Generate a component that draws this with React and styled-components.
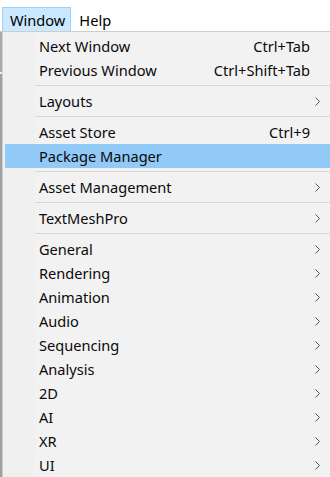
import React from 'react';
import styled, {createGlobalStyle} from 'styled-components';

const GlobalStyle = createGlobalStyle`
    html, body {
        margin: 0;
        background: #ffffff;
    }
    body {
        font-family: "Noto Sans", "Open Sans", sans-serif;
        color: #000;
    }
`;

const MENU = [
    {label: 'Next Window', shortcut: 'Ctrl+Tab'},
    {label: 'Previous Window', shortcut: 'Ctrl+Shift+Tab'},
    'sep',
    {label: 'Layouts', sub: true},
    'sep',
    {label: 'Asset Store', shortcut: 'Ctrl+9'},
    {label: 'Package Manager', active: true},
    'sep',
    {label: 'Asset Management', sub: true},
    'sep',
    {label: 'TextMeshPro', sub: true},
    'sep',
    {label: 'General', sub: true},
    {label: 'Rendering', sub: true},
    {label: 'Animation', sub: true},
    {label: 'Audio', sub: true},
    {label: 'Sequencing', sub: true},
    {label: 'Analysis', sub: true},
    {label: '2D', sub: true},
    {label: 'AI', sub: true},
    {label: 'XR', sub: true},
    {label: 'UI', sub: true},
];

const Page = styled.div`
    width: 330px;
    height: 477px;
    overflow: hidden;
    display: flex;
    flex-direction: column;
`;

const MenuBar = styled.div`
    height: 31px;
    display: flex;
    align-items: flex-end;
    padding-left: 2px;
    box-sizing: border-box;
    background: #fff;
`;

const MenuTitle = styled.div`
    height: 24px;
    box-sizing: border-box;
    padding: 0 5px 0 7px;
    display: flex;
    align-items: center;
    font-size: 14.6px;
    border: 1px solid ${p => p.$open ? '#99d1ff' : 'transparent'};
    border-bottom: none;
    background: ${p => p.$open ? '#cce8ff' : 'transparent'};
`;

const Body = styled.div`
    flex: 1;
    display: flex;
    border-top: 1px solid #cccccc;
`;

const Behind = styled.div`
    width: 2px;
    background: linear-gradient(#a9a9a9 0 40px, #f0f0f0 40px 42px, #a0a0a0 42px);
    border-right: 1px solid #d0d0d0;
`;

const Dropdown = styled.div`
    flex: 1;
    padding-top: 2px;
    background: linear-gradient(90deg, #f0f0f0 0 32px, #f2f2f2 32px);
`;

const Item = styled.div`
    height: 24px;
    margin-left: 2px;
    display: grid;
    grid-template-columns: 34px 1fr auto 20px;
    align-items: center;
    font-size: 14.6px;
    color: #0a0a0a;
    background: ${p => p.$active ? '#91c9f7' : 'transparent'};
`;

const Label = styled.span`
    grid-column: 2;
    white-space: nowrap;
`;

const Shortcut = styled.span`
    grid-column: 3;
    white-space: nowrap;
`;

const Arrow = styled.span`
    grid-column: 4;
    display: flex;
    padding-left: 5px;
`;

const Separator = styled.div`
    height: 7px;
    display: flex;
    align-items: center;
    padding-left: 32px;
    &::after {
        content: '';
        flex: 1;
        height: 1px;
        background: #d7d7d7;
    }
`;

const Chevron = () =>
    <svg width="5" height="9" viewBox="0 0 5 9">
        <path d="M0.5 0.5 L4.5 4.5 L0.5 8.5" fill="none" stroke="#555" strokeWidth="1"/>
    </svg>;

export default function App() {
    return <Page>
        <GlobalStyle/>
        <MenuBar>
            <MenuTitle $open>Window</MenuTitle>
            <MenuTitle>Help</MenuTitle>
        </MenuBar>
        <Body>
            <Behind/>
            <Dropdown>
                {MENU.map((m, i) => m === 'sep' ?
                    <Separator key={i}/> :
                    <Item key={i} $active={m.active}>
                        <Label>{m.label}</Label>
                        {m.shortcut && <Shortcut>{m.shortcut}</Shortcut>}
                        {m.sub && <Arrow><Chevron/></Arrow>}
                    </Item>
                )}
            </Dropdown>
        </Body>
    </Page>;
}
